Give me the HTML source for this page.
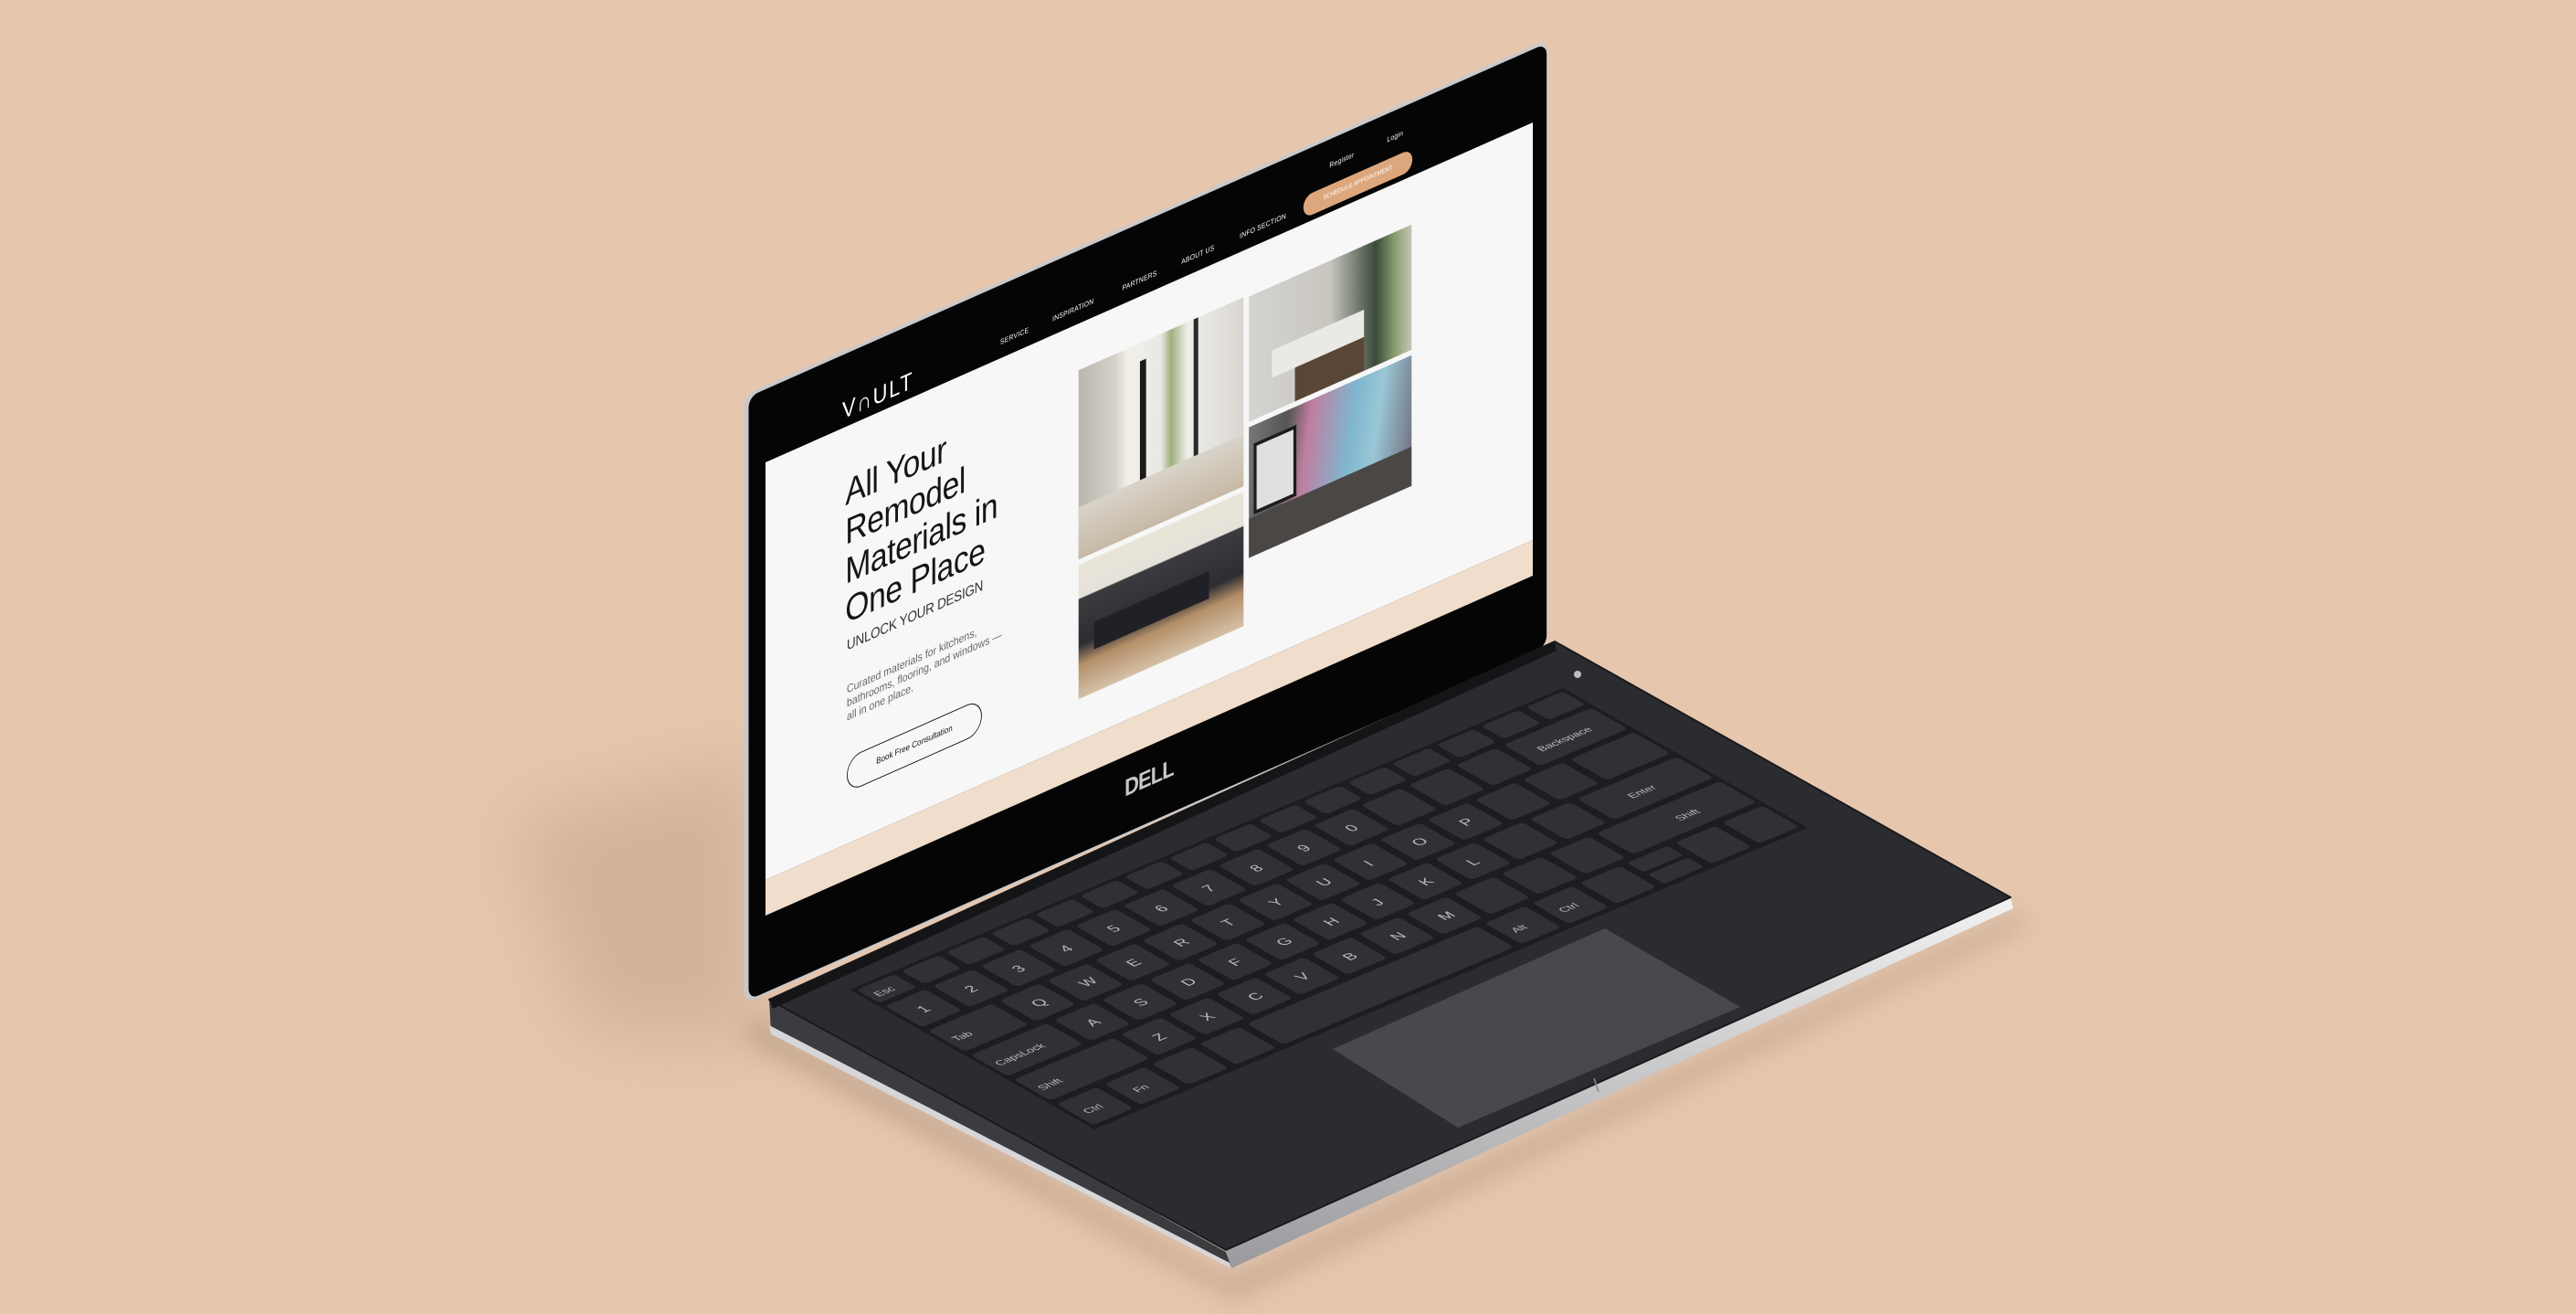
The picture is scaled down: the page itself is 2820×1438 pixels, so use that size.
<!DOCTYPE html>
<html><head><meta charset="utf-8"><style>
html,body{margin:0;padding:0}
body{width:2820px;height:1438px;overflow:hidden;background:#E6C7AE;position:relative;font-family:"Liberation Sans",sans-serif}
.plane{position:absolute;left:0;top:0;width:1000px;height:496px;transform-origin:0 0;transform:matrix(0.84,-0.372,0,1,838,506)}
.abs{position:absolute}
.nav{color:#fff;font-size:8px;letter-spacing:.3px;white-space:nowrap}
.img{position:absolute;overflow:hidden}
</style></head><body>
<svg class="abs" style="left:0;top:0" width="2820" height="1438">
<defs>
<filter id="bl" x="-50%" y="-50%" width="200%" height="200%"><feGaussianBlur stdDeviation="40"/></filter>
<filter id="bl2" x="-50%" y="-50%" width="200%" height="200%"><feGaussianBlur stdDeviation="14"/></filter>
<linearGradient id="sil" x1="0" y1="0" x2="0" y2="1"><stop offset="0" stop-color="#f2f2f2"/><stop offset="1" stop-color="#9a9a9e"/></linearGradient>
</defs>
<polygon points="560,900 830,830 830,1140 640,1130" fill="#b89a83" opacity=".45" filter="url(#bl)"/>
<polygon points="820,1110 1346,1400 2210,1000 2220,1010 1350,1420 820,1140" fill="#9c806c" opacity=".5" filter="url(#bl2)"/>
</svg>

<!-- lid + screen plane -->
<div class="plane">
  <div class="abs" style="left:-28px;top:-84px;width:1047px;height:666px;background:#c9c9cc;border-radius:14px"></div>
  <div class="abs" style="left:-22px;top:-80px;width:1040px;height:660px;background:#050505;border-radius:12px"></div>
  <!-- nav -->
  <div class="abs" style="left:100px;top:-34px;color:#fff;font-size:26px;letter-spacing:2px;white-space:nowrap">V&#x2229;ULT</div>
  <div class="abs nav" style="left:306px;top:-22px">SERVICE</div>
  <div class="abs nav" style="left:374px;top:-22px">INSPIRATION</div>
  <div class="abs nav" style="left:465px;top:-22px">PARTNERS</div>
  <div class="abs nav" style="left:542px;top:-22px">ABOUT US</div>
  <div class="abs nav" style="left:618px;top:-22px">INFO SECTION</div>
  <div class="abs nav" style="left:735px;top:-56px">Register</div>
  <div class="abs nav" style="left:810px;top:-56px">Login</div>
  <div class="abs" style="left:701px;top:-30px;width:142px;height:24px;border-radius:12px;background:#DDA77E;color:#fff;font-size:7px;line-height:24px;text-align:center">SCHEDULE APPOINTMENT</div>
  <!-- content -->
  <div class="abs" style="left:0;top:0;width:1000px;height:457px;background:#F7F7F7"></div>
  <div class="abs" style="left:0;top:457px;width:1000px;height:39px;background:#F0DDCB"></div>
  <div class="abs" style="left:104px;top:52px;font-size:40px;line-height:43px;color:#151515;letter-spacing:-0.5px;white-space:nowrap">All Your<br>Remodel<br>Materials in<br>One Place</div>
  <div class="abs" style="left:106px;top:232px;font-size:16px;color:#333;white-space:nowrap;letter-spacing:-.3px">UNLOCK YOUR DESIGN</div>
  <div class="abs" style="left:106px;top:281px;font-size:12.5px;line-height:15px;color:#666;white-space:nowrap">Curated materials for kitchens,<br>bathrooms, flooring, and windows —<br>all in one place.</div>
  <div class="abs" style="left:106px;top:363px;width:174px;height:36px;border:1.5px solid #111;border-radius:20px;font-size:9.5px;line-height:36px;text-align:center;color:#111">Book Free Consultation</div>
  <!-- images -->
  <div class="img" style="left:408px;top:51px;width:215px;height:207px;background:linear-gradient(90deg,#b9b6ae 0,#d4d1c8 22%,#f2f0ea 30%,#e8e9e4 50%,#9fb07d 56%,#eeeeea 66%,#d9d6cf 100%)">
    <div class="abs" style="left:80px;top:20px;width:8px;height:170px;background:#1a1a1a"></div>
    <div class="abs" style="left:150px;top:0;width:6px;height:207px;background:#2a2a2a"></div>
    <div class="abs" style="left:0;top:150px;width:215px;height:57px;background:linear-gradient(#d9d3c9,#c7b9a6)"></div>
  </div>
  <div class="img" style="left:408px;top:264px;width:215px;height:147px;background:linear-gradient(#e9e4d8 0,#e6e2da 25%,#3a3b3f 26%,#2d2e33 60%,#b48f68 75%,#d4c0a6 100%)">
    <div class="abs" style="left:20px;top:70px;width:150px;height:30px;background:#202126"></div>
  </div>
  <div class="img" style="left:630px;top:53px;width:212px;height:137px;background:linear-gradient(90deg,#d3d3d0 0,#c9c6bf 50%,#3a4a3a 78%,#8aa070 90%,#c7c3ba 100%)">
    <div class="abs" style="left:30px;top:70px;width:120px;height:30px;background:#e9e9e6"></div>
    <div class="abs" style="left:60px;top:100px;width:90px;height:37px;background:#5a4636"></div>
  </div>
  <div class="img" style="left:630px;top:196px;width:212px;height:143px;background:linear-gradient(100deg,#777 0,#555 22%,#c07ea0 35%,#7fb6cf 60%,#9ac7d6 75%,#6f6a78 100%)">
    <div class="abs" style="left:6px;top:20px;width:48px;height:70px;background:#e0e0e0;border:4px solid #1c1c1c"></div>
    <div class="abs" style="left:0;top:100px;width:212px;height:43px;background:#4b4745"></div>
  </div>
  <div class="abs" style="left:468px;top:516px;font-size:26px;font-weight:bold;color:#c8c8c8;letter-spacing:-1px">DELL</div>
</div>

<svg class="abs" style="left:0;top:0" width="2820" height="1438">
<!-- left side face -->
<polygon points="842,1092 1342,1370 1348,1386 844,1132" fill="#3b3c40"/>
<polygon points="842,1122 1346,1382 1348,1388 844,1132" fill="#d6d6d8"/>
<!-- front edge -->
<polygon points="1342,1368 2201,982 2204,994 1348,1388" fill="url(#sil)"/>
<!-- deck -->
<polygon points="842,1094 1342,1368 2201,982 1702,702" fill="#2b2c30" stroke="#1a1a1d" stroke-width="2" stroke-linejoin="round"/>
<polygon points="842,1094 1702,702 1704,712 846,1104" fill="#151517"/>
<!-- keyboard well -->
<polygon points="930,1083 1711,753 1979,906 1198,1236" fill="#1c1d20"/>
<circle cx="1727" cy="738" r="4" fill="#bdbdbd"/>
<!-- touchpad -->
<polygon points="1757,1016 1905,1102 1596,1234 1459,1148" fill="#48484e"/>
<line x1="1745" y1="1180" x2="1750" y2="1195" stroke="#888" stroke-width="1.5"/>
<g transform="matrix(0.5207,-0.22,0.4467,0.255,930,1083)" font-family="Liberation Sans" fill="#bbb" font-size="30">
<g fill="#303135">
<!-- fn row -->
<rect x="8" y="8" width="78" height="56" rx="8"/><rect x="102" y="8" width="78" height="56" rx="8"/><rect x="196" y="8" width="78" height="56" rx="8"/><rect x="290" y="8" width="78" height="56" rx="8"/><rect x="383" y="8" width="78" height="56" rx="8"/><rect x="477" y="8" width="78" height="56" rx="8"/><rect x="571" y="8" width="78" height="56" rx="8"/><rect x="665" y="8" width="78" height="56" rx="8"/><rect x="758" y="8" width="78" height="56" rx="8"/><rect x="852" y="8" width="78" height="56" rx="8"/><rect x="946" y="8" width="78" height="56" rx="8"/><rect x="1040" y="8" width="78" height="56" rx="8"/><rect x="1133" y="8" width="78" height="56" rx="8"/><rect x="1227" y="8" width="78" height="56" rx="8"/><rect x="1321" y="8" width="78" height="56" rx="8"/><rect x="1415" y="8" width="78" height="56" rx="8"/>
<!-- row1 -->
<rect x="8" y="78" width="84" height="90" rx="8"/><rect x="108" y="78" width="84" height="90" rx="8"/><rect x="208" y="78" width="84" height="90" rx="8"/><rect x="308" y="78" width="84" height="90" rx="8"/><rect x="408" y="78" width="84" height="90" rx="8"/><rect x="508" y="78" width="84" height="90" rx="8"/><rect x="608" y="78" width="84" height="90" rx="8"/><rect x="708" y="78" width="84" height="90" rx="8"/><rect x="808" y="78" width="84" height="90" rx="8"/><rect x="908" y="78" width="84" height="90" rx="8"/><rect x="1008" y="78" width="84" height="90" rx="8"/><rect x="1108" y="78" width="84" height="90" rx="8"/><rect x="1208" y="78" width="84" height="90" rx="8"/><rect x="1308" y="78" width="184" height="90" rx="8"/>
<!-- row2 -->
<rect x="8" y="183" width="134" height="90" rx="8"/><rect x="158" y="183" width="84" height="90" rx="8"/><rect x="258" y="183" width="84" height="90" rx="8"/><rect x="358" y="183" width="84" height="90" rx="8"/><rect x="458" y="183" width="84" height="90" rx="8"/><rect x="558" y="183" width="84" height="90" rx="8"/><rect x="658" y="183" width="84" height="90" rx="8"/><rect x="758" y="183" width="84" height="90" rx="8"/><rect x="858" y="183" width="84" height="90" rx="8"/><rect x="958" y="183" width="84" height="90" rx="8"/><rect x="1058" y="183" width="84" height="90" rx="8"/><rect x="1158" y="183" width="84" height="90" rx="8"/><rect x="1258" y="183" width="84" height="90" rx="8"/><rect x="1358" y="183" width="134" height="90" rx="8"/>
<!-- row3 -->
<rect x="8" y="288" width="159" height="90" rx="8"/><rect x="183" y="288" width="84" height="90" rx="8"/><rect x="283" y="288" width="84" height="90" rx="8"/><rect x="383" y="288" width="84" height="90" rx="8"/><rect x="483" y="288" width="84" height="90" rx="8"/><rect x="583" y="288" width="84" height="90" rx="8"/><rect x="683" y="288" width="84" height="90" rx="8"/><rect x="783" y="288" width="84" height="90" rx="8"/><rect x="883" y="288" width="84" height="90" rx="8"/><rect x="983" y="288" width="84" height="90" rx="8"/><rect x="1083" y="288" width="84" height="90" rx="8"/><rect x="1183" y="288" width="84" height="90" rx="8"/><rect x="1283" y="288" width="209" height="90" rx="8"/>
<!-- row4 -->
<rect x="8" y="393" width="209" height="90" rx="8"/><rect x="233" y="393" width="84" height="90" rx="8"/><rect x="333" y="393" width="84" height="90" rx="8"/><rect x="433" y="393" width="84" height="90" rx="8"/><rect x="533" y="393" width="84" height="90" rx="8"/><rect x="633" y="393" width="84" height="90" rx="8"/><rect x="733" y="393" width="84" height="90" rx="8"/><rect x="833" y="393" width="84" height="90" rx="8"/><rect x="933" y="393" width="84" height="90" rx="8"/><rect x="1033" y="393" width="84" height="90" rx="8"/><rect x="1133" y="393" width="84" height="90" rx="8"/><rect x="1233" y="393" width="259" height="90" rx="8"/>
<!-- row5 -->
<rect x="8" y="498" width="84" height="90" rx="8"/><rect x="108" y="498" width="84" height="90" rx="8"/><rect x="208" y="498" width="84" height="90" rx="8"/><rect x="308" y="498" width="84" height="90" rx="8"/><rect x="408" y="498" width="484" height="90" rx="8"/><rect x="908" y="498" width="84" height="90" rx="8"/><rect x="1008" y="498" width="84" height="90" rx="8"/><rect x="1108" y="498" width="84" height="90" rx="8"/><rect x="1208" y="498" width="84" height="40" rx="6"/><rect x="1208" y="548" width="84" height="40" rx="6"/><rect x="1308" y="498" width="84" height="90" rx="8"/><rect x="1408" y="498" width="84" height="90" rx="8"/>
</g>
<text x="20" y="48" font-size="22">Esc</text>
<text x="40" y="135">1</text><text x="140" y="135">2</text><text x="240" y="135">3</text><text x="340" y="135">4</text><text x="440" y="135">5</text><text x="540" y="135">6</text><text x="640" y="135">7</text><text x="740" y="135">8</text><text x="840" y="135">9</text><text x="940" y="135">0</text>
<text x="190" y="240">Q</text><text x="290" y="240">W</text><text x="390" y="240">E</text><text x="490" y="240">R</text><text x="590" y="240">T</text><text x="690" y="240">Y</text><text x="790" y="240">U</text><text x="890" y="240">I</text><text x="990" y="240">O</text><text x="1090" y="240">P</text>
<text x="215" y="345">A</text><text x="315" y="345">S</text><text x="415" y="345">D</text><text x="515" y="345">F</text><text x="615" y="345">G</text><text x="715" y="345">H</text><text x="815" y="345">J</text><text x="915" y="345">K</text><text x="1015" y="345">L</text>
<text x="265" y="450">Z</text><text x="365" y="450">X</text><text x="465" y="450">C</text><text x="565" y="450">V</text><text x="665" y="450">B</text><text x="765" y="450">N</text><text x="865" y="450">M</text>
<text x="20" y="240" font-size="22">Tab</text><text x="20" y="345" font-size="22">CapsLock</text><text x="20" y="450" font-size="22">Shift</text><text x="1350" y="345" font-size="22">Enter</text><text x="1360" y="450" font-size="22">Shift</text><text x="1340" y="135" font-size="22">Backspace</text>
<text x="25" y="555" font-size="22">Ctrl</text><text x="130" y="555" font-size="22">Fn</text><text x="925" y="555" font-size="22">Alt</text><text x="1025" y="555" font-size="22">Ctrl</text>
</g>
</svg>
</body></html>
